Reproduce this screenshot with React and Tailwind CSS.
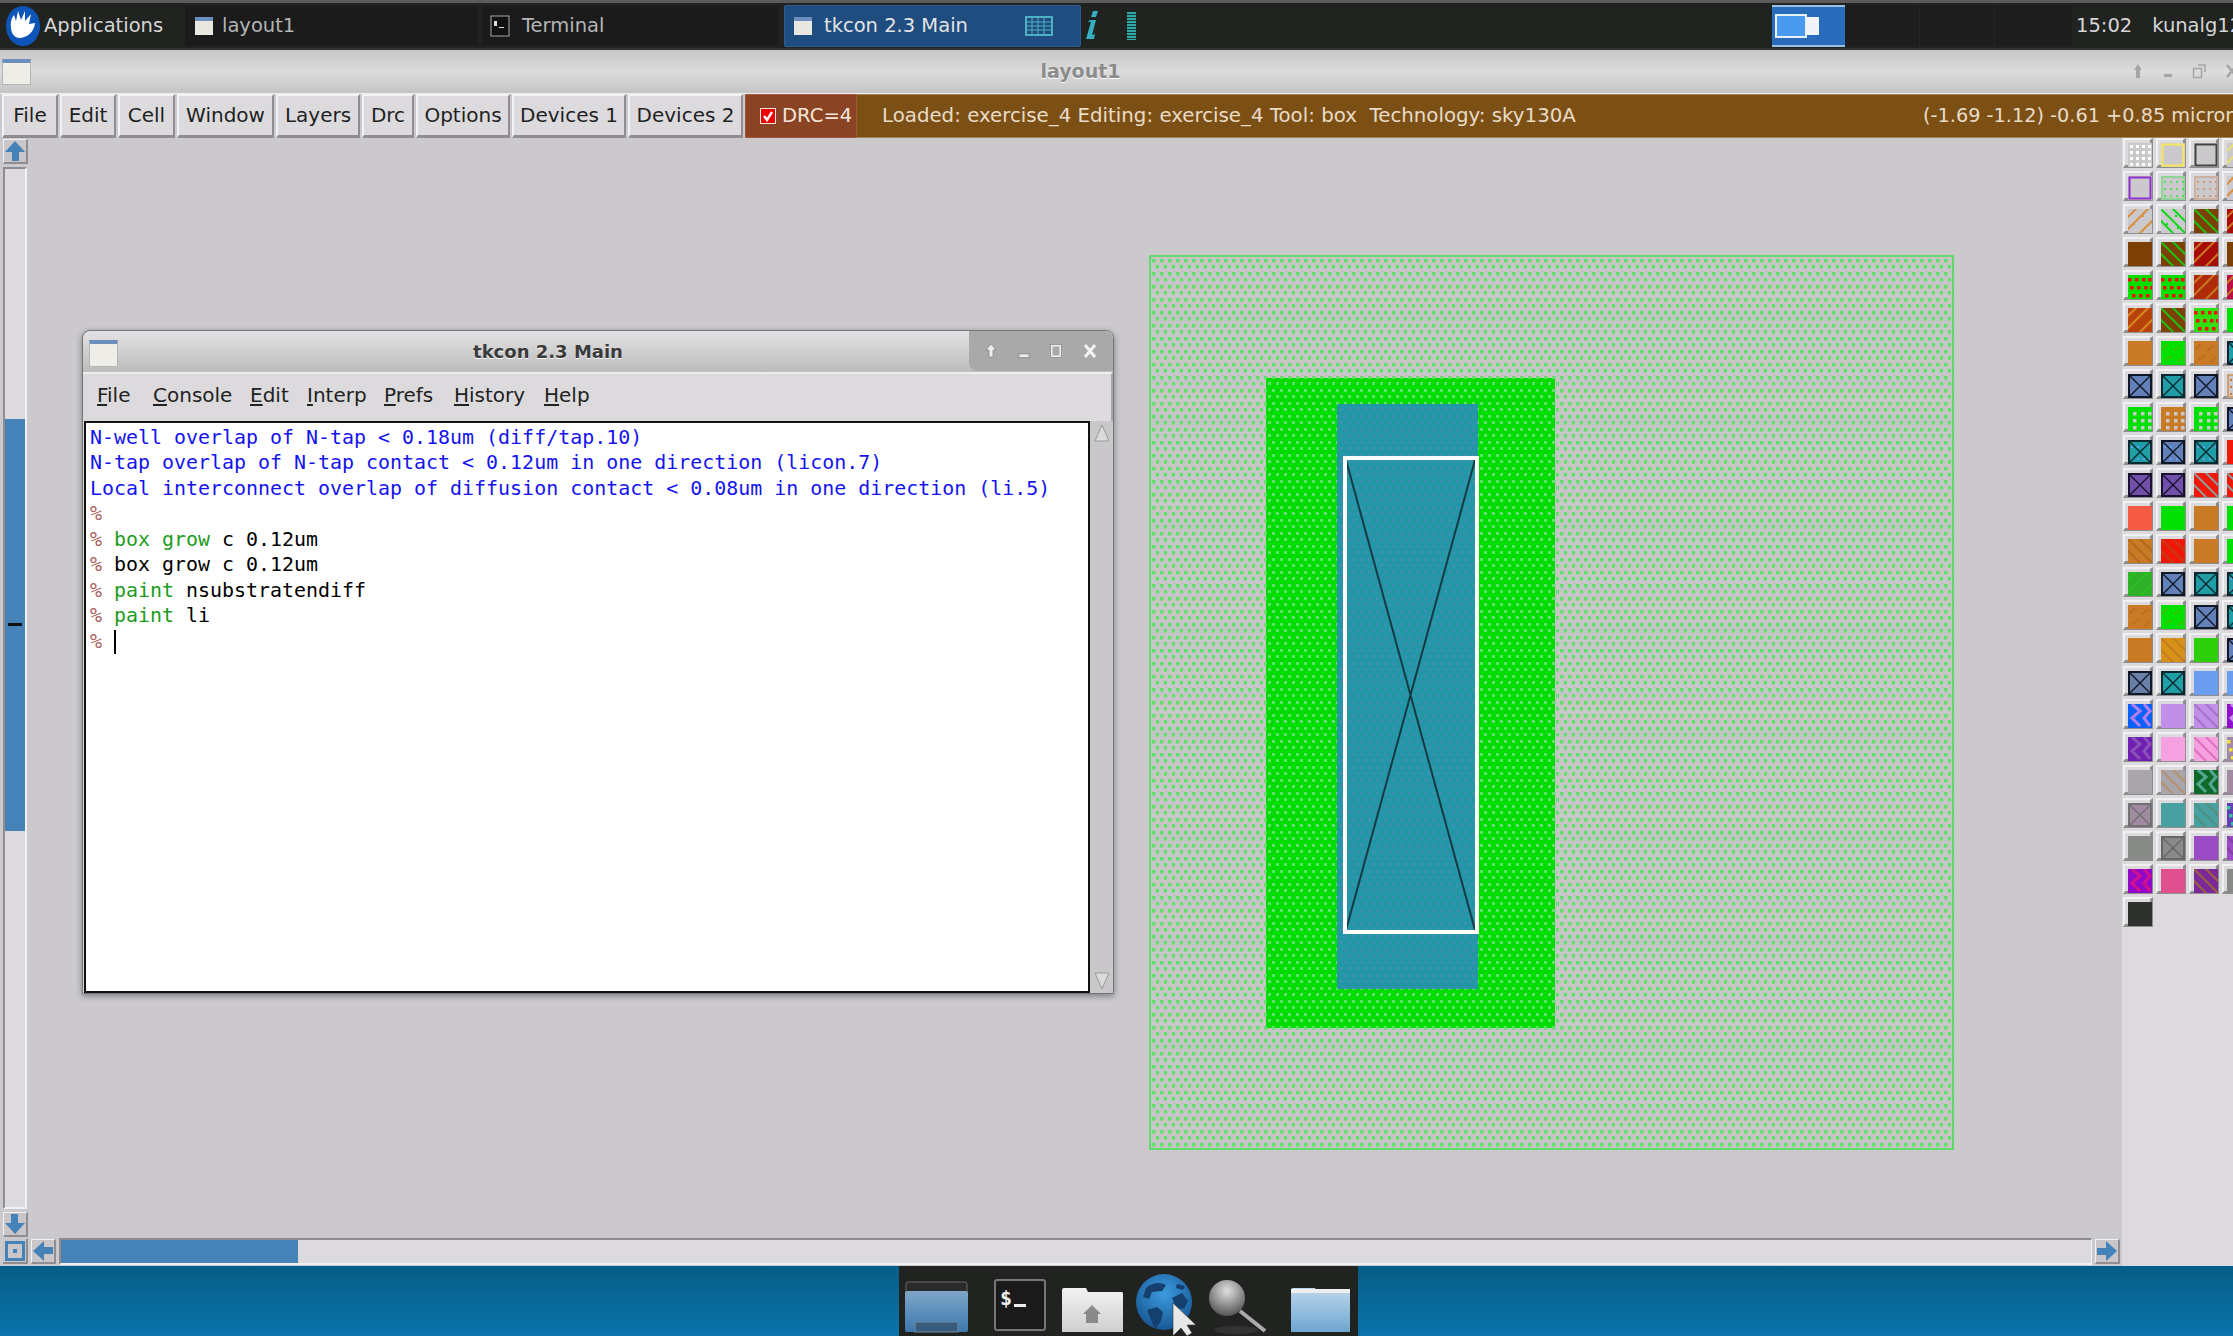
import React from 'react';

const uiFont = 'font-["DejaVu_Sans",sans-serif]';

const toolbarItems = [
  { label: 'File', w: 'w-[56px]' },
  { label: 'Edit', w: 'w-[56px]' },
  { label: 'Cell', w: 'w-[57px]' },
  { label: 'Window', w: 'w-[97px]' },
  { label: 'Layers', w: 'w-[84px]' },
  { label: 'Drc', w: 'w-[52px]' },
  { label: 'Options', w: 'w-[94px]' },
  { label: 'Devices 1', w: 'w-[114px]' },
  { label: 'Devices 2', w: 'w-[115px]' },
];

// [colour, kind, ink] per swatch, row by row
const C = {
  gray: '#cbc9cc', brown: '#7c3f06', dred: '#a80c06', green: '#00e000', orange: '#c97a25',
  blue: '#6480b8', teal: '#1f9ea6', purple: '#7050a8', red: '#f01808',
};
const swatches = [
  [[C.gray, 'dots', '#fff'], [C.gray, 'outline', '#f5e85a'], [C.gray, 'outline', '#444'], [C.gray, 'diag', '#e8e070']],
  [[C.gray, 'outline', '#8a30c8'], [C.gray, 'outdots', '#50e060'], [C.gray, 'outdots', '#d09878'], [C.gray, 'diagdots', '#d89040']],
  [[C.gray, 'diagdots', '#d89040'], [C.gray, 'backdots', '#10d818'], [C.brown, 'back', '#20c010'], [C.dred, 'diag', '#c87820']],
  [[C.brown, 'solid', ''], [C.brown, 'back', '#20c010'], [C.dred, 'diag', '#c87820'], [C.brown, 'solid', '']],
  [[C.green, 'reddots', '#f01010'], [C.green, 'reddots', '#f01010'], ['#b02a08', 'diag', '#c87820'], ['#b81040', 'diag', '#c87820']],
  [['#b8420c', 'diag', '#d88820'], [C.brown, 'back', '#20c010'], ['#30e010', 'reddots', '#f01010'], [C.green, 'solid', '']],
  [[C.orange, 'solid', ''], [C.green, 'dash', '#9a9a20'], [C.orange, 'dash', '#a06020'], [C.teal, 'x', '#123']],
  [[C.blue, 'x', '#101828'], [C.teal, 'x', '#0a2830'], [C.blue, 'x', '#101828'], [C.gray, 'outdots', C.orange]],
  [[C.green, 'weave', C.gray], [C.orange, 'weave', C.gray], [C.green, 'weave', C.gray], [C.blue, 'x', '#101828']],
  [[C.teal, 'xdots', '#0a2830'], [C.blue, 'xdots', '#101828'], [C.teal, 'xdots', '#0a2830'], [C.red, 'solid', '']],
  [[C.purple, 'x', '#1a1030'], [C.purple, 'x', '#1a1030'], [C.red, 'back', '#909898'], [C.red, 'back', '#909898']],
  [['#f55a42', 'solid', ''], [C.green, 'solid', ''], [C.orange, 'solid', ''], [C.green, 'solid', '']],
  [[C.orange, 'back', '#b06a20'], [C.red, 'back', '#c83818'], [C.orange, 'solid', ''], [C.green, 'solid', '']],
  [['#30b028', 'diag', '#28c020'], [C.blue, 'x', '#101828'], [C.teal, 'x', '#0a2830'], [C.teal, 'xdots', '#0a2830']],
  [[C.orange, 'dash', '#a06020'], [C.green, 'dash', '#9a9a20'], [C.blue, 'x', '#101828'], [C.teal, 'x', '#0a2830']],
  [[C.orange, 'solid', ''], ['#d89018', 'back', '#c08020'], ['#2ccf08', 'solid', ''], [C.blue, 'x', '#101828']],
  [['#6a80a8', 'x', '#101828'], [C.teal, 'x', '#0a2830'], ['#6a9cf0', 'solid', ''], ['#6a9cf0', 'solid', '']],
  [['#0a60f8', 'zig', '#b080e8'], ['#c090e8', 'solid', ''], ['#c090e8', 'back', '#a870c8'], ['#9010d0', 'zig', '#c090e8']],
  [['#7020b0', 'zig', '#8a50b8'], ['#f5a0e0', 'solid', ''], ['#f5a0e0', 'back', '#e070c0'], ['#a08aa8', 'reddots', '#f0e040']],
  [['#a8a6aa', 'solid', ''], ['#a8a6aa', 'back', '#b89070'], ['#0f6828', 'zig', '#50a890'], ['#a08aa0', 'solid', '']],
  [['#a08aa0', 'x', '#707070'], ['#48a0a0', 'solid', ''], ['#48a0a0', 'back', '#509080'], ['#6040b0', 'reddots', '#40c0a0']],
  [['#888a88', 'solid', ''], ['#888a88', 'x', '#666'], ['#9a4cc4', 'solid', ''], ['#9a4cc4', 'back', '#8040a0']],
  [['#9008c8', 'zig', '#d01090'], ['#e0508f', 'solid', ''], ['#7a2a98', 'back', '#a06040'], ['#888a88', 'solid', '']],
  [['#2e302e', 'solid', '']],
];

const Ink = ({ kind, ink }) => {
  const dots = [3, 9, 15, 21];
  if (kind === 'outline') return <rect x="1.5" y="1.5" width="21" height="21" fill="none" stroke={ink} strokeWidth="2" />;
  if (kind === 'dots') return dots.map((x) => dots.map((y) => <rect key={`${x}${y}`} x={x - 1} y={y - 1} width="3" height="3" fill={ink} />));
  if (kind === 'outdots')
    return (
      <>
        <rect x="1" y="1" width="22" height="22" fill="none" stroke={ink} />
        {dots.map((x) => [5, 12, 19].map((y) => <rect key={`${x}${y}`} x={x} y={y} width="2" height="2" fill={ink} />))}
      </>
    );
  if (kind === 'reddots')
    return [3, 11, 19].map((y, r) => [2, 9, 16, 22].map((x) => <rect key={`${x}${y}`} x={x + r * 2 - 2} y={y} width="3.5" height="3.5" fill={ink} />));
  if (kind === 'diag' || kind === 'diagdots')
    return (
      <>
        <path d="M-2 10L10 -2M-2 22L22 -2M10 26L26 10" stroke={ink} strokeWidth="2" />
        {kind === 'diagdots' && <path d="M5 14h2v2h-2zM14 6h2v2h-2zM16 18h2v2h-2z" fill={ink} />}
      </>
    );
  if (kind === 'back' || kind === 'backdots')
    return (
      <>
        <path d="M-2 10L14 26M-2 -2L26 26M10 -2L26 14" stroke={ink} strokeWidth="2" />
        {kind === 'backdots' && <path d="M5 14h2v2h-2zM14 6h2v2h-2zM16 18h2v2h-2z" fill={ink} />}
      </>
    );
  if (kind === 'dash') return <path d="M2 8L7 3M14 9L20 4M5 19L11 14M17 21L22 16" stroke={ink} strokeWidth="1.2" strokeDasharray="1.5 1" />;
  if (kind === 'x' || kind === 'xdots')
    return (
      <>
        {kind === 'xdots' && dots.map((x) => [6, 18].map((y) => <rect key={`${x}${y}`} x={x} y={y} width="2" height="2" fill="#60a0f0" />))}
        <path d="M0 0L24 24M24 0L0 24" stroke={ink} strokeWidth="1.4" />
        <rect x="1" y="1" width="22" height="22" fill="none" stroke={ink} strokeWidth="2" />
      </>
    );
  if (kind === 'weave')
    return (
      <>
        {[5, 13, 20].map((x) => [5, 12, 19].map((y) => <rect key={`${x}${y}`} x={x} y={y} width="3.5" height="3.5" fill={ink} />))}
      </>
    );
  if (kind === 'zig') return <path d="M4 0L12 7L4 14L12 22M16 0L22 7L16 14L22 22" fill="none" stroke={ink} strokeWidth="3" />;
  return null;
};

const Swatch = ({ bg, kind, ink }) => (
  <div className="w-[30px] h-[30px] shrink-0 p-[3px] border-t-2 border-l-2 border-t-[#f1f0f2] border-l-[#f1f0f2] border-r-[3px] border-b-[3px] border-r-[#8f8d90] border-b-[#8f8d90]">
    <svg width="24" height="24" viewBox="0 0 24 24" className="block">
      <rect width="24" height="24" fill={bg} />
      <Ink kind={kind} ink={ink} />
    </svg>
  </div>
);

const Arrow = ({ rotate }) => (
  <svg width="22" height="22" viewBox="0 0 22 22" style={{ transform: `rotate(${rotate}deg)` }}>
    <path d="M11 1L21 12H15V21H8V12H1Z" fill="#4582b8" />
  </svg>
);

const ScrollBtn = ({ rotate, className = '' }) => (
  <div className={`w-[25px] h-[25px] shrink-0 flex items-center justify-center bg-[#c8c6c9] border-t border-l border-t-[#f1f0f2] border-l-[#f1f0f2] border-r-2 border-b-2 border-r-[#8f8d90] border-b-[#8f8d90] ${className}`}>
    <Arrow rotate={rotate} />
  </div>
);

const TaskIcon = () => (
  <svg width="20" height="20" viewBox="0 0 20 20">
    <rect x="1" y="1" width="18" height="18" fill="#e9e8e0" />
    <rect x="1" y="1" width="18" height="4" fill="#6d8fbd" />
  </svg>
);

const XfceLogo = () => (
  <svg width="36" height="40" viewBox="0 0 36 40">
    <ellipse cx="18" cy="20" rx="17" ry="20" fill="#0d55b8" />
    <path d="M6 21C5 17 7 11 9 9L11 15L13 5L16 14L20 5L20 15L26 8L24 18L30 17C29 26 23 31 15 32C9 32 6 27 6 21Z" fill="#fff" />
  </svg>
);

const LayoutDrawing = () => (
  // canvas origin is 27,138 in the page
  <svg width="2095" height="1100" className="absolute left-0 top-0">
    <defs>
      <pattern id="ndots" x="-1" y="-3" width="8" height="13" patternUnits="userSpaceOnUse">
        <rect x="1" y="2" width="3.5" height="3.5" fill="#5fe06a" />
        <rect x="5" y="8" width="3.5" height="3.5" fill="#5fe06a" />
      </pattern>
      <pattern id="gdots" x="-1" y="-3" width="8" height="13" patternUnits="userSpaceOnUse">
        <rect width="8" height="13" fill="#00dc00" />
        <rect x="1" y="2" width="3" height="3" fill="#5fe06a" />
        <rect x="5" y="8" width="3" height="3" fill="#5fe06a" />
      </pattern>
      <pattern id="tdots" x="-1" y="-3" width="8" height="13" patternUnits="userSpaceOnUse">
        <rect width="8" height="13" fill="#2397a6" />
        <rect x="1" y="2" width="3" height="3" fill="#3d8fb4" />
        <rect x="5" y="8" width="3" height="3" fill="#3d8fb4" />
      </pattern>
    </defs>
    <g transform="translate(-27 -138)">
      <rect x="1150" y="256" width="803" height="893" fill="#c6c6c6" />
      <rect x="1150" y="256" width="803" height="893" fill="url(#ndots)" stroke="#3fde50" strokeWidth="1.5" />
      <rect x="1266" y="378" width="289" height="650" fill="url(#gdots)" />
      <rect x="1337" y="404" width="141" height="585" fill="url(#tdots)" />
      <path d="M1346 460L1475 930M1475 460L1346 930" stroke="#123c44" strokeWidth="2" fill="none" />
      <rect x="1345" y="458" width="132" height="474" fill="none" stroke="#fff" strokeWidth="4" />
    </g>
  </svg>
);

const Term = ({ children }) => <div className="h-[25.45px] leading-[25.45px] whitespace-pre">{children}</div>;
const P = () => <span className="text-[#a8605c]">% </span>;
const G = ({ children }) => <span className="text-[#1c9c1c]">{children}</span>;

const TkconWindow = () => {
  const menus = [
    ['F', 'ile', 'w-[56px]'],
    ['C', 'onsole', 'w-[97px]'],
    ['E', 'dit', 'w-[57px]'],
    ['I', 'nterp', 'w-[77px]'],
    ['P', 'refs', 'w-[70px]'],
    ['H', 'istory', 'w-[90px]'],
    ['H', 'elp', 'w-[50px]'],
  ];
  return (
    <div className={`absolute left-[55px] top-[192px] w-[1032px] h-[664px] flex flex-col rounded-t-[8px] border border-[#77757a] bg-[#c9c7ca] shadow-[0_2px_6px_rgba(0,0,0,0.4)] ${uiFont}`}>
      <div className="h-[41px] shrink-0 relative flex items-center justify-center rounded-t-[8px] bg-gradient-to-b from-[#e4e2e4] to-[#bcbcbc]">
        <div className="absolute left-[6px] top-[9px] w-[29px] h-[27px] bg-[#eeede8] border border-[#b5b5b5] border-t-[4px] border-t-[#6d8fbd]" />
        <span className="text-[18px] font-bold text-[#3a3a3a] [text-shadow:0_1px_0_#fff] mr-[100px]">tkcon 2.3 Main</span>
        <div className="absolute right-0 top-0 w-[144px] h-[40px] rounded-tr-[8px] rounded-bl-[8px] bg-[#a9a9a9] flex items-center justify-around px-[6px]">
          <svg width="14" height="16" viewBox="0 0 14 16"><path d="M7 1L12 7H9V14H5V7H2Z" fill="#eee" stroke="#777" strokeWidth="0.6" /></svg>
          <svg width="14" height="16" viewBox="0 0 14 16"><rect x="2" y="11" width="10" height="3.5" fill="#eee" stroke="#777" strokeWidth="0.6" /></svg>
          <svg width="14" height="16" viewBox="0 0 14 16"><rect x="2.5" y="2.5" width="9" height="11" fill="none" stroke="#eee" strokeWidth="2" /><rect x="1.5" y="1.5" width="11" height="13" fill="none" stroke="#777" strokeWidth="0.6" /></svg>
          <svg width="16" height="16" viewBox="0 0 16 16"><path d="M3 2L13 14M13 2L3 14" stroke="#f2f2f2" strokeWidth="3" /></svg>
        </div>
      </div>
      <div className="h-[49px] shrink-0 flex items-center pl-[14px] pb-[5px] bg-[#dcdadd] border-t-2 border-t-[#efeef0] border-r-2 border-r-[#a8a6a9] text-[20px] text-[#222]">
        {menus.map(([u, rest, w], i) => (
          <span key={i} className={`${w} shrink-0`}>
            <span className="underline underline-offset-2">{u}</span>
            {rest}
          </span>
        ))}
      </div>
      <div className="flex-1 min-h-0 flex bg-[#dcdadd]">
        <div className="w-[1006px] ml-[1px] border-2 border-[#111] bg-white pl-[4px] pt-[2px] overflow-hidden font-['DejaVu_Sans_Mono',monospace] text-[19.95px] text-black">
          <Term><span className="text-[#1414f0]">N-well overlap of N-tap &lt; 0.18um (diff/tap.10)</span></Term>
          <Term><span className="text-[#1414f0]">N-tap overlap of N-tap contact &lt; 0.12um in one direction (licon.7)</span></Term>
          <Term><span className="text-[#1414f0]">Local interconnect overlap of diffusion contact &lt; 0.08um in one direction (li.5)</span></Term>
          <Term><P /></Term>
          <Term><P /><G>box grow</G> c 0.12um</Term>
          <Term><P />box grow c 0.12um</Term>
          <Term><P /><G>paint</G> nsubstratendiff</Term>
          <Term><P /><G>paint</G> li</Term>
          <Term><P /><span className="inline-block w-[2px] h-[24px] bg-black align-middle" /></Term>
        </div>
        <div className="w-[23px] flex flex-col items-center justify-between py-[2px] bg-[#c9c7ca]">
          <svg width="18" height="22" viewBox="0 0 18 22"><path d="M9 2L16 18H2Z" fill="#dcdadd" stroke="#999" /></svg>
          <svg width="18" height="22" viewBox="0 0 18 22"><path d="M9 20L16 4H2Z" fill="#dcdadd" stroke="#999" /></svg>
        </div>
      </div>
    </div>
  );
};

const Dock = () => (
  <svg width="459" height="70" viewBox="899 1266 459 70" className="block">
    <defs>
      <linearGradient id="winb" x1="0" y1="0" x2="0" y2="1"><stop offset="0" stopColor="#7fa6c9" /><stop offset="1" stopColor="#3c78ad" /></linearGradient>
      <linearGradient id="hfold" x1="0" y1="0" x2="0" y2="1"><stop offset="0" stopColor="#f2f2f2" /><stop offset="1" stopColor="#cfcfcf" /></linearGradient>
      <linearGradient id="bfold" x1="0" y1="0" x2="0" y2="1"><stop offset="0" stopColor="#bcd6ea" /><stop offset="1" stopColor="#6ea6d2" /></linearGradient>
      <radialGradient id="glb" cx="0.5" cy="0.35" r="0.7"><stop offset="0" stopColor="#3d9be0" /><stop offset="1" stopColor="#14538f" /></radialGradient>
      <radialGradient id="lens" cx="0.5" cy="0.3" r="0.7"><stop offset="0" stopColor="#e0e0e0" /><stop offset="1" stopColor="#555" /></radialGradient>
    </defs>
    <rect x="906" y="1282" width="61" height="12" rx="2" fill="#2a2c2a" stroke="#666" />
    <rect x="905" y="1291" width="63" height="41" rx="2" fill="url(#winb)" />
    <rect x="915" y="1322" width="43" height="10" fill="#3a5c7c" stroke="#6e8ea8" />
    <rect x="995" y="1280" width="50" height="50" rx="2" fill="#1a1a1a" stroke="#777" strokeWidth="2" />
    <text x="1000" y="1305" fontFamily="DejaVu Sans Mono" fontWeight="bold" fontSize="20" fill="#eee">$</text>
    <rect x="1014" y="1304" width="12" height="3" fill="#eee" />
    <path d="M1062 1290a2 2 0 012-2h22l2 4h34a2 2 0 011 2v38h-61z" fill="url(#hfold)" />
    <path d="M1092 1305l-9 9h3v9h12v-9h3z" fill="#8a8a8a" />
    <circle cx="1164" cy="1302" r="28" fill="url(#glb)" />
    <path d="M1146 1288c6-6 16-6 20-3l-4 6-10 1-3 7-6-2zM1147 1310l10-3 6 5-2 9-6 8-4-9zM1172 1298l10-5 6 8-4 8-8-1zM1177 1284l8 2-2 4-7-2z" fill="#15406e" />
    <path d="M1173 1303V1336L1181 1328L1187 1336L1192 1333L1187 1325L1196 1325Z" fill="#e8e8e8" stroke="#333" strokeWidth="0.6" />
    <circle cx="1227" cy="1298" r="18" fill="url(#lens)" />
    <path d="M1240 1311L1265 1331" stroke="#aaa" strokeWidth="4" />
    <ellipse cx="1236" cy="1330" rx="22" ry="4" fill="#333" />
    <path d="M1291 1290a2 2 0 012-2h22l2 4h33v40h-59z" fill="url(#bfold)" />
    <rect x="1291" y="1289" width="59" height="4" fill="#eee" />
  </svg>
);

export default function App() {
  return (
    <div className={`w-[2233px] h-[1336px] overflow-hidden flex flex-col bg-[#cbc9cc] ${uiFont}`}>
      {/* xfce panel */}
      <div className="h-[50px] shrink-0 flex items-center bg-[#212321] border-t-[3px] border-t-[#5c5c5c] border-b-2 border-b-[#333] text-[19.5px] text-[#d6d6d6]">
        <div className="ml-[5px] w-[36px] shrink-0"><XfceLogo /></div>
        <span className="ml-[3px] w-[141px] shrink-0">Applications</span>
        <div className="w-[293px] h-[40px] shrink-0 flex items-center gap-[8px] pl-[4px] bg-[#1b1b1b] text-[#b5b5b5]"><span className="pl-[5px]"><TaskIcon /></span>layout1</div>
        <div className="w-[296px] h-[40px] ml-[4px] shrink-0 flex items-center gap-[12px] pl-[8px] bg-[#1b1b1b] text-[#b5b5b5]">
          <svg width="20" height="22" viewBox="0 0 20 22"><rect x="1" y="1" width="18" height="20" fill="#111" stroke="#aaa" /><path d="M4 6h3v5H4zM9 12h5v1H9z" fill="#ddd" /></svg>
          Terminal
        </div>
        <div className="w-[297px] h-[42px] ml-[6px] shrink-0 flex items-center pl-[8px] rounded-[2px] border border-[#2c5c94] bg-[#1f4d80] text-[#e4e4e4]">
          <TaskIcon />
          <span className="ml-[11px]">tkcon 2.3 Main</span>
          <svg width="28" height="20" viewBox="0 0 28 20" className="ml-[57px]"><rect x="1" y="1" width="26" height="18" fill="none" stroke="#4fb0c4" strokeWidth="2" /><path d="M1 6h26M1 10h26M1 14h26M7 1v18M13 1v18M19 1v18" stroke="#4fb0c4" /></svg>
        </div>
        <svg width="16" height="32" viewBox="0 0 16 32" className="ml-[2px] shrink-0"><path d="M10 1h5l-2 6h-5zM7 10h6l-4 15 3-1-1 5H3l5-17H5z" fill="#35b0c0" /></svg>
        <div className="ml-[28px] w-[9px] h-[28px] shrink-0 bg-[repeating-linear-gradient(to_bottom,#2fa8a8_0,#2fa8a8_2px,#1d3a3a_2px,#1d3a3a_3px)]" />
        <div className="ml-[636px] w-[73px] h-[42px] shrink-0 flex items-center justify-start pl-[3px] bg-[#2a6cbc] border-y-2 border-y-[#9cc0e4]">
          <div className="w-[32px] h-[24px] bg-[#4a9af0] border-2 border-[#e8f0f8]" />
          <div className="w-[12px] h-[18px] bg-[#f0f4f8]" />
        </div>
        <div className="w-[75px] h-[42px] shrink-0 bg-[#1d1d1d] border-r border-r-[#252525]" />
        <div className="w-[75px] h-[42px] shrink-0 bg-[#1d1d1d] border-r border-r-[#252525]" />
        <div className="w-[77px] h-[42px] shrink-0 bg-[#1d1d1d]" />
        <span className="ml-[4px] shrink-0">15:02</span>
        <span className="ml-[20px] shrink-0">kunalg12</span>
      </div>

      {/* magic layout window title */}
      <div className="h-[43px] shrink-0 relative flex items-center justify-center bg-gradient-to-b from-[#c6c6c6] via-[#dcdcdc] to-[#c4c4c4]">
        <div className="absolute left-[2px] top-[9px] w-[29px] h-[26px] bg-[#eeede8] border border-[#b5b5b5] border-t-[4px] border-t-[#6d8fbd]" />
        <span className="text-[19px] font-bold text-[#8c8c8c] [text-shadow:0_1px_0_#fff] mr-[72px]">layout1</span>
        <div className="absolute right-[-6px] top-[13px] flex items-center gap-[19px] text-[#a5a5a5]">
          <svg width="12" height="16" viewBox="0 0 12 16"><path d="M6 1L10 7H8V15H4V7H2Z" fill="#a5a5a5" /></svg>
          <svg width="10" height="16" viewBox="0 0 10 16"><rect x="1" y="11" width="8" height="3" fill="#a5a5a5" /></svg>
          <svg width="14" height="16" viewBox="0 0 14 16"><path d="M1.5 5.5h8v9h-8zM6 2h7v7" fill="none" stroke="#a5a5a5" strokeWidth="1.5" /></svg>
          <svg width="14" height="16" viewBox="0 0 14 16"><path d="M2 2L12 14M12 2L2 14" stroke="#a5a5a5" strokeWidth="2.5" /></svg>
        </div>
      </div>

      {/* toolbar */}
      <div className="h-[45px] shrink-0 flex items-stretch pl-[2px] text-[20px] border-t border-t-[#efeef0]">
        {toolbarItems.map((item) => (
          <div key={item.label} className={`${item.w} mr-[2px] shrink-0 flex items-center justify-center pb-[2px] bg-[#dcdadd] text-[#1f1f1f] border-t-2 border-l-2 border-t-[#f3f2f4] border-l-[#f3f2f4] border-r-2 border-b-[3px] border-r-[#8f8d90] border-b-[#8f8d90]`}>
            {item.label}
          </div>
        ))}
        <div className="w-[112px] shrink-0 flex items-center gap-[6px] pl-[14px] bg-[#8a4423] text-[19.6px] text-[#f2e6dc] border border-[#a05a3a]">
          <span className="w-[16px] h-[16px] bg-[#f00000] border border-[#e8e8e8] flex items-center justify-center">
            <svg width="12" height="12" viewBox="0 0 12 12"><path d="M2 6L5 10L10 2" fill="none" stroke="#fff" strokeWidth="2.4" /></svg>
          </span>
          DRC=4
        </div>
        <div className="flex-1 min-w-0 flex items-center pl-[25px] bg-[#7c5015] text-[19.8px] text-[#e8dcc8] whitespace-pre overflow-hidden border-y border-y-[#a4845a]">
          <span className="w-[1041px] shrink-0">Loaded: exercise_4 Editing: exercise_4 Tool: box  Technology: sky130A</span>
          <span className="shrink-0 text-[19.3px]">(-1.69 -1.12) -0.61 +0.85 microns</span>
        </div>
      </div>

      {/* main area */}
      <div className="flex-1 min-h-0 flex">
        <div className="w-[2122px] shrink-0 flex flex-col">
          <div className="flex-1 min-h-0 flex">
            <div className="w-[27px] shrink-0 flex flex-col pl-[3px] pt-[1px]">
              <ScrollBtn rotate={0} />
              <div className="flex-1 min-h-0 my-[3px] w-[24px] flex flex-col bg-[#dcdadd] border-t-2 border-l-2 border-t-[#8f8d90] border-l-[#8f8d90] border-r-2 border-r-[#f1f0f2] border-b-2 border-b-[#f1f0f2]">
                <div className="h-[250px] shrink-0" />
                <div className="h-[412px] shrink-0 bg-[#4582b8] relative">
                  <div className="absolute left-[3px] top-[204px] w-[14px] h-[3px] bg-[#111]" />
                </div>
              </div>
              <ScrollBtn rotate={180} />
            </div>
            <div className="flex-1 relative">
              <LayoutDrawing />
              <TkconWindow />
            </div>
          </div>
          <div className="h-[29px] shrink-0 flex items-center gap-[3px] pl-[3px] pr-[2px]">
            <div className="w-[25px] h-[25px] shrink-0 flex items-center justify-center border-r-2 border-b-2 border-r-[#8f8d90] border-b-[#8f8d90] bg-[#c8c6c9]">
              <svg width="20" height="20" viewBox="0 0 20 20"><rect x="1.5" y="1.5" width="17" height="17" fill="none" stroke="#4582b8" strokeWidth="3" /><rect x="8" y="8" width="4" height="4" fill="#4582b8" /></svg>
            </div>
            <ScrollBtn rotate={-90} />
            <div className="flex-1 h-[27px] flex bg-[#dcdadd] border-t-2 border-l-2 border-t-[#8f8d90] border-l-[#8f8d90] border-r border-r-[#f1f0f2] border-b-2 border-b-[#f1f0f2]">
              <div className="w-[237px] h-full bg-[#4582b8]" />
            </div>
            <ScrollBtn rotate={90} />
          </div>
        </div>
        <div className="flex-1 min-w-0 bg-[#dcdadd] overflow-hidden pl-[1px]">
          {swatches.map((row, r) => (
            <div key={r} className="flex gap-[3px] h-[33px]">
              {row.map(([bg, kind, ink], c) => (
                <Swatch key={c} bg={bg} kind={kind} ink={ink} />
              ))}
            </div>
          ))}
        </div>
      </div>

      {/* dock */}
      <div className="h-[70px] shrink-0 flex justify-start pl-[899px] bg-gradient-to-b from-[#065d86] to-[#0a74ac]">
        <div className="w-[459px] h-full bg-[#212321]">
          <Dock />
        </div>
      </div>
    </div>
  );
}
